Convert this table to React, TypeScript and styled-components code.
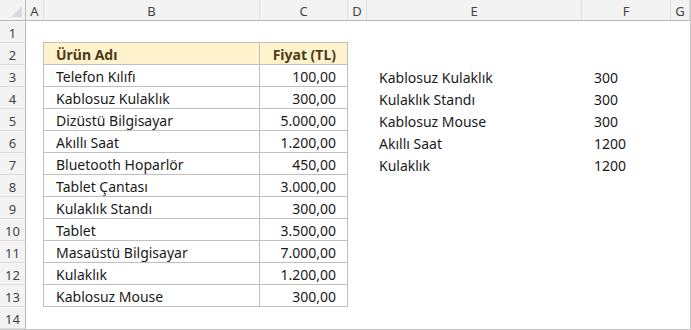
import styled, { createGlobalStyle } from 'styled-components';

const GlobalStyle = createGlobalStyle`
   html, body {
      margin: 0;
      padding: 0;
      background: #ffffff;
   }
   body {
      font-family: 'Noto Sans', 'Open Sans', sans-serif;
   }
`;

const COLS = ['A', 'B', 'C', 'D', 'E', 'F', 'G'];
const COL_WIDTHS = [18, 216, 88, 19, 215, 89, 19];

const products: [string, string][] = [
   ['Telefon Kılıfı', '100,00'],
   ['Kablosuz Kulaklık', '300,00'],
   ['Dizüstü Bilgisayar', '5.000,00'],
   ['Akıllı Saat', '1.200,00'],
   ['Bluetooth Hoparlör', '450,00'],
   ['Tablet Çantası', '3.000,00'],
   ['Kulaklık Standı', '300,00'],
   ['Tablet', '3.500,00'],
   ['Masaüstü Bilgisayar', '7.000,00'],
   ['Kulaklık', '1.200,00'],
   ['Kablosuz Mouse', '300,00'],
];

const picks: [string, string][] = [
   ['Kablosuz Kulaklık', '300'],
   ['Kulaklık Standı', '300'],
   ['Kablosuz Mouse', '300'],
   ['Akıllı Saat', '1200'],
   ['Kulaklık', '1200'],
];

function cellValue(row: number, col: number): { text: string; kind: 'plain' | 'head' | 'table' | 'num' } | null {
   // table B2:C13
   if (row === 2 && col === 1) return { text: 'Ürün Adı', kind: 'head' };
   if (row === 2 && col === 2) return { text: 'Fiyat (TL)', kind: 'head' };
   if (row >= 3 && row <= 13 && col === 1) return { text: products[row - 3][0], kind: 'table' };
   if (row >= 3 && row <= 13 && col === 2) return { text: products[row - 3][1], kind: 'num' };
   // list E3:F7
   if (row >= 3 && row <= 7 && col === 4) return { text: picks[row - 3][0], kind: 'plain' };
   if (row >= 3 && row <= 7 && col === 5) return { text: picks[row - 3][1], kind: 'plain' };
   return null;
}

function App() {
   const rows = Array.from({ length: 14 }, (_, i) => i + 1);
   return (
      <>
         <GlobalStyle />
         <Sheet>
            <Corner>
               <CornerMark />
            </Corner>
            {COLS.map((c) => (
               <ColHead key={c}>{c}</ColHead>
            ))}
            {rows.map((r) => (
               <Row key={r} r={r} />
            ))}
         </Sheet>
      </>
   );
}

function Row({ r }: { r: number }) {
   return (
      <>
         <RowHead>{r}</RowHead>
         {COLS.map((c, ci) => {
            const v = cellValue(r, ci);
            const inTable = r >= 2 && r <= 13 && (ci === 1 || ci === 2);
            return (
               <Cell
                  key={c}
                  $boxed={inTable}
                  $top={inTable && r === 2}
                  $left={inTable && ci === 1}
                  $head={v?.kind === 'head'}
                  $align={v?.kind === 'num' || (v?.kind === 'head' && ci === 2) ? 'right' : 'left'}
               >
                  {v?.text}
               </Cell>
            );
         })}
      </>
   );
}

export default App;

const Sheet = styled.div`
   display: grid;
   grid-template-columns: 26px ${COL_WIDTHS.map((w) => w + 'px').join(' ')};
   grid-template-rows: 21px repeat(14, 22px);
   width: 691px;
   height: 330px;
   box-sizing: border-box;
   border-right: 1px solid #c6c6c6;
   border-bottom: 1px solid #c6c6c6;
   background: #ffffff;
   overflow: hidden;
`;

const Corner = styled.div`
   position: relative;
   background: #f3f3f3;
   border-right: 1px solid #b8b8b8;
   border-bottom: 1px solid #b8b8b8;
   box-sizing: border-box;
`;

const CornerMark = styled.div`
   position: absolute;
   right: 3px;
   bottom: 3px;
   width: 0;
   height: 0;
   border-left: 11px solid transparent;
   border-bottom: 11px solid #dadada;
`;

const ColHead = styled.div`
   display: flex;
   align-items: center;
   justify-content: center;
   background: #f3f3f3;
   border-right: 1px solid #dcdcdc;
   border-bottom: 1px solid #b8b8b8;
   box-sizing: border-box;
   font-family: 'Noto Sans', sans-serif;
   font-size: 13px;
   color: #444444;
   padding-top: 1px;
`;

const RowHead = styled.div`
   display: flex;
   align-items: center;
   justify-content: center;
   background: #f3f3f3;
   border-right: 1px solid #b8b8b8;
   border-bottom: 1px solid #dcdcdc;
   box-sizing: border-box;
   font-family: 'Noto Sans', sans-serif;
   font-size: 13px;
   color: #444444;
   padding-top: 2px;
`;

const Cell = styled.div<{ $boxed: boolean; $top: boolean; $left: boolean; $head: boolean; $align: 'left' | 'right' }>`
   display: flex;
   align-items: center;
   justify-content: ${(p) => (p.$align === 'right' ? 'flex-end' : 'flex-start')};
   padding: 2px 11px 0 12px;
   box-sizing: border-box;
   white-space: nowrap;
   overflow: hidden;
   font-family: 'Noto Sans', sans-serif;
   font-size: 14px;
   color: #1a1a1a;
   background: ${(p) => (p.$head ? '#fff2cc' : '#ffffff')};
   font-weight: ${(p) => (p.$head ? 700 : 400)};
   ${(p) => p.$head && 'color: #4d3b17;'}
   border-right: ${(p) => (p.$boxed ? '1px solid #bfbfbf' : 'none')};
   border-bottom: ${(p) => (p.$boxed ? '1px solid #bfbfbf' : 'none')};
   border-top: ${(p) => (p.$top ? '1px solid #bfbfbf' : 'none')};
   border-left: ${(p) => (p.$left ? '1px solid #bfbfbf' : 'none')};
   margin-top: ${(p) => (p.$top ? '-1px' : '0')};
   margin-left: ${(p) => (p.$left ? '-1px' : '0')};
`;
